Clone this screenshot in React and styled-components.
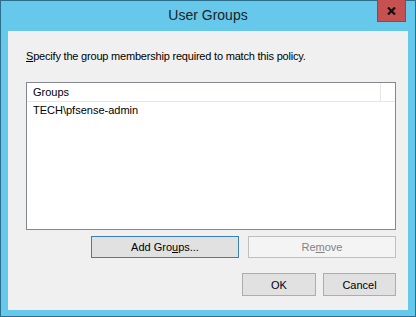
import styled, { createGlobalStyle } from 'styled-components';

const Global = createGlobalStyle`
  html, body {
    margin: 0;
    padding: 0;
    background: #ffffff;
  }
  body {
    font-family: 'Liberation Sans', Arial, sans-serif;
  }
`;

const Window = styled.div`
  box-sizing: border-box;
  width: 416px;
  height: 317px;
  display: flex;
  flex-direction: column;
  background: #66c8ea;
  border: 1px solid #2b6f8c;
  padding-bottom: 6px;
`;

const TitleBar = styled.div`
  height: 30px;
  display: grid;
  grid-template-columns: 1fr auto 1fr;
  align-items: start;
`;

const Title = styled.div`
  grid-column: 2;
  padding-top: 6px;
  font-size: 14px;
  line-height: 17px;
  color: #1e1e1e;
`;

const CloseButton = styled.button`
  grid-column: 3;
  justify-self: end;
  margin-right: 9px;
  margin-top: -1px;
  width: 29px;
  height: 22px;
  padding: 0;
  border: 1px solid #a23e3e;
  border-top: none;
  background: #c75050;
  display: flex;
  align-items: center;
  justify-content: center;
`;

const Client = styled.div`
  flex: 1;
  margin: 0 7px;
  background: #f0f0f0;
  padding: 19px 12px 0 18px;
  display: flex;
  flex-direction: column;
  font-size: 11px;
  color: #000;
`;

const Prompt = styled.div`
  line-height: 13px;
  letter-spacing: -0.2px;
  u {
    text-decoration: underline;
  }
`;

const ListView = styled.div`
  margin-top: 19px;
  height: 148px;
  box-sizing: border-box;
  border: 1px solid #828790;
  background: #ffffff;
  display: flex;
  flex-direction: column;
`;

const Header = styled.div`
  display: flex;
  height: 18px;
  border-bottom: 1px solid #e5e5e5;
`;

const HeaderCell = styled.div`
  width: ${(p) => p.width}px;
  box-sizing: border-box;
  padding-left: 6px;
  line-height: 18px;
  border-right: 1px solid #e5e5e5;
`;

const Row = styled.div`
  padding-left: 6px;
  line-height: 17px;
  height: 17px;
`;

const ButtonRow = styled.div`
  display: flex;
  justify-content: flex-end;
  gap: ${(p) => p.gap}px;
  margin-top: ${(p) => p.top}px;
`;

const Button = styled.button`
  box-sizing: border-box;
  width: ${(p) => p.width}px;
  height: ${(p) => p.height || 23}px;
  padding: 0;
  font-family: 'Liberation Sans', Arial, sans-serif;
  font-size: 11px;
  color: ${(p) => (p.disabled ? '#838383' : '#000')};
  background: ${(p) => (p.disabled ? '#f4f4f4' : '#e1e1e1')};
  border: 1px solid
    ${(p) => (p.focused ? '#3c7fb1' : p.disabled ? '#bfbfbf' : '#adadad')};
  u {
    text-decoration: underline;
  }
`;

export default function App() {
  return (
    <>
      <Global />
      <Window>
        <TitleBar>
          <Title>User Groups</Title>
          <CloseButton aria-label="Close">
            <svg width="9" height="8" viewBox="0 0 9 8">
              <path
                d="M1 0.5 L8 7.5 M8 0.5 L1 7.5"
                stroke="#111"
                strokeWidth="2.2"
                fill="none"
              />
            </svg>
          </CloseButton>
        </TitleBar>
        <Client>
          <Prompt>
            <u>S</u>pecify the group membership required to match this policy.
          </Prompt>
          <ListView>
            <Header>
              <HeaderCell width={354}>Groups</HeaderCell>
            </Header>
            <Row>TECH\pfsense-admin</Row>
          </ListView>
          <ButtonRow top={6} gap={9}>
            <Button width={148} height={22} focused>
              Add Gro<u>u</u>ps...
            </Button>
            <Button width={148} height={22} disabled>
              Re<u>m</u>ove
            </Button>
          </ButtonRow>
          <ButtonRow top={15} gap={7}>
            <Button width={74}>OK</Button>
            <Button width={73}>Cancel</Button>
          </ButtonRow>
        </Client>
      </Window>
    </>
  );
}
